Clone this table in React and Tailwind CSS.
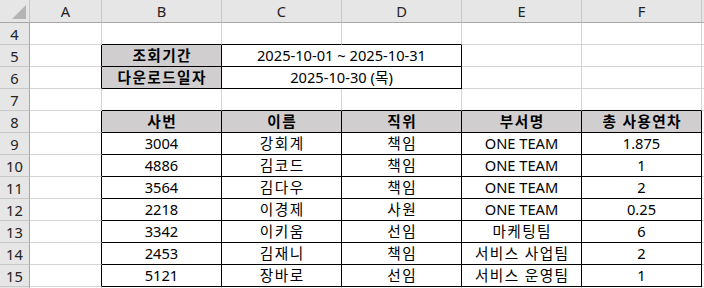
const font = { fontFamily: '"Noto Sans", "Noto Sans CJK KR", sans-serif' };

const cols = ['A', 'B', 'C', 'D', 'E', 'F'];

const rows = [
  ['3004', '강회계', '책임', 'ONE TEAM', '1.875'],
  ['4886', '김코드', '책임', 'ONE TEAM', '1'],
  ['3564', '김다우', '책임', 'ONE TEAM', '2'],
  ['2218', '이경제', '사원', 'ONE TEAM', '0.25'],
  ['3342', '이키움', '선임', '마케팅팀', '6'],
  ['2453', '김재니', '책임', '서비스 사업팀', '2'],
  ['5121', '장바로', '선임', '서비스 운영팀', '1'],
];

// hangul-only text gets a little extra spacing to match Malgun Gothic's width
const isHangul = (v) => typeof v === 'string' && /^[가-힣 ]+$/.test(v);

function Cell({ children, r, b, gray, bold, span }) {
  return (
    <div
      className={[
        'h-[22px] border-r border-b flex items-center justify-center whitespace-nowrap overflow-hidden text-[14.67px] leading-[21px] text-black',
        r ? 'border-r-black' : 'border-r-[#d4d4d4]',
        b ? 'border-b-black' : 'border-b-[#d4d4d4]',
        gray ? 'bg-[#d0cece]' : 'bg-white',
        bold ? 'font-bold' : '',
        span ? 'col-span-2' : '',
        isHangul(children) ? 'tracking-[1.4px] pl-[1.4px]' : '',
      ].join(' ')}
    >
      {children}
    </div>
  );
}

function RowHead({ n }) {
  return (
    <div className="h-[22px] bg-[#e6e6e6] border-r border-r-[#a6a6a6] border-b border-b-[#c8c8c8] flex items-center justify-center text-[14.67px] text-[#222]">
      {n}
    </div>
  );
}

function Tail() {
  return <div className="h-[22px] border-b border-b-[#d4d4d4] bg-white" />;
}

export default function App() {
  return (
    <div className="w-[704px] h-[288px] overflow-hidden bg-white" style={font}>
      <div className="grid grid-cols-[30px_72px_120px_120px_120px_120px_120px_1fr]">
        {/* column headers */}
        <div className="relative h-[23px] bg-[#e6e6e6] border-r border-r-[#c8c8c8] border-b border-b-[#a6a6a6]">
          <svg className="absolute left-[12px] top-[5px]" width="14" height="14" viewBox="0 0 14 14">
            <polygon points="14,0 14,14 0,14" fill="#b4b4b4" />
          </svg>
        </div>
        {cols.map((c) => (
          <div
            key={c}
            className="h-[23px] bg-[#e6e6e6] border-r border-r-[#c8c8c8] border-b border-b-[#a6a6a6] flex items-center justify-center text-[14.67px] text-[#222]"
          >
            {c}
          </div>
        ))}
        <div className="h-[23px] bg-[#e6e6e6] border-b border-b-[#a6a6a6]" />

        {/* row 4 */}
        <RowHead n={4} />
        <Cell />
        <Cell b />
        <Cell b />
        <Cell b />
        <Cell />
        <Cell />
        <Tail />

        {/* row 5 */}
        <RowHead n={5} />
        <Cell r />
        <Cell r b gray bold>조회기간</Cell>
        <Cell r b span>2025-10-01 ~ 2025-10-31</Cell>
        <Cell />
        <Cell />
        <Tail />

        {/* row 6 */}
        <RowHead n={6} />
        <Cell r />
        <Cell r b gray bold>다운로드일자</Cell>
        <Cell r b span>2025-10-30 (목)</Cell>
        <Cell />
        <Cell />
        <Tail />

        {/* row 7 */}
        <RowHead n={7} />
        <Cell />
        <Cell b />
        <Cell b />
        <Cell b />
        <Cell b />
        <Cell b />
        <Tail />

        {/* row 8 - table header */}
        <RowHead n={8} />
        <Cell r />
        {['사번', '이름', '직위', '부서명', '총 사용연차'].map((h) => (
          <Cell key={h} r b gray bold>{h}</Cell>
        ))}
        <Tail />

        {rows.map((row, i) => (
          <div key={i} className="contents">
            <RowHead n={9 + i} />
            <Cell r />
            {row.map((v, j) => (
              <Cell key={j} r b>{v}</Cell>
            ))}
            <Tail />
          </div>
        ))}

        {/* row 16, only its top edge shows */}
        <RowHead />
        <Cell />
        <Cell />
        <Cell />
        <Cell />
        <Cell />
        <Cell />
        <Tail />
      </div>
    </div>
  );
}
